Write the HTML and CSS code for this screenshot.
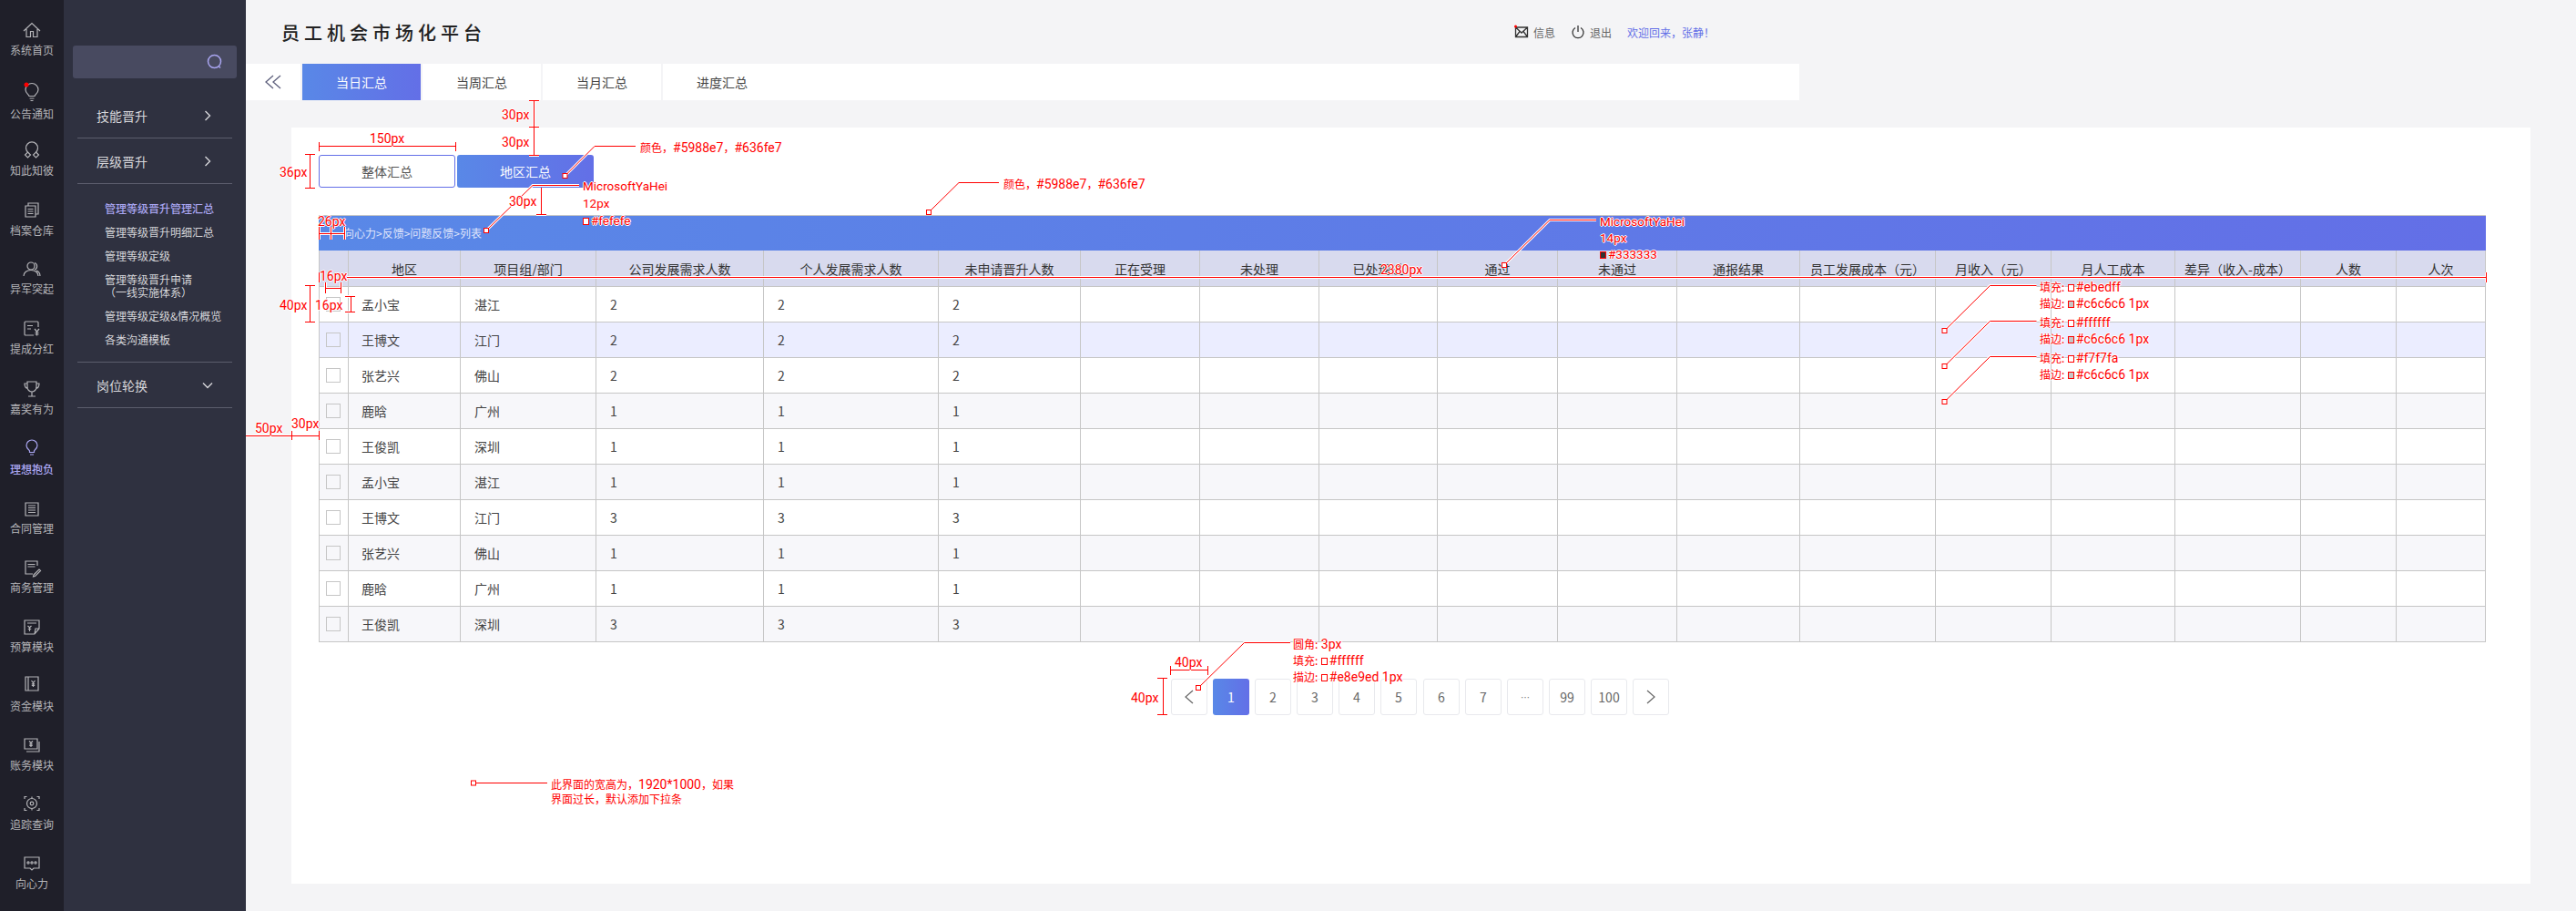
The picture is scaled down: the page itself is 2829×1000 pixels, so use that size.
FILE: index.html
```html
<!DOCTYPE html>
<html lang="zh-CN">
<head>
    <meta charset="UTF-8">
    <title>员工机会市场化平台</title>
    <link rel="stylesheet" href="styles.css">
</head>
<body>

<nav class="rail">
    <a class="rail-item">
        <svg viewBox="0 0 24 24"><path d="M3 13l9-8.5 9 8.5M6 11v8.5h4.5v-6h3v6H18V11"/></svg>
        <span>系统首页</span>
    </a>
    <a class="rail-item">
        <svg viewBox="0 0 24 24"><path d="M9 14.5c0-1.5-4-3-4-7a7 7 0 0 1 14 0c0 4-4 5.5-4 7zM9.5 17h5M10.5 19.5h3"/><circle class="dot" cx="6" cy="2" r="2.5"/></svg>
        <span>公告通知</span>
    </a>
    <a class="rail-item">
        <svg viewBox="0 0 24 24"><path d="M8 14.5a6.5 6.5 0 1 1 8 0M7.5 14l3 3-3 3-3-3zM16.5 14l3 3-3 3-3-3z"/></svg>
        <span>知此知彼</span>
    </a>
    <a class="rail-item">
        <svg viewBox="0 0 24 24"><path d="M5 7h11v12H5zM8 7V4h11v12h-3M7.5 10.5h6M7.5 13h6M7.5 15.5h6"/></svg>
        <span>档案仓库</span>
    </a>
    <a class="rail-item">
        <svg viewBox="0 0 24 24"><circle cx="11" cy="9" r="4"/><path d="M3 20c0-4 3.5-6.5 8-6.5s8 2.500 8 6.500M15 5.500a4 4 0 0 1 0 7.500M17 14c2.500 1 4 3 4 6"/></svg>
        <span>异军突起</span>
    </a>
    <a class="rail-item">
        <svg viewBox="0 0 24 24"><path d="M19 10V5a1 1 0 0 0-1-1H5a1 1 0 0 0-1 1v13a1 1 0 0 0 1 1h9M7 8.500h6M7 12h4M15 12l2.500 3 2.500-3M17.500 15v4.500M15.500 16h4M15.500 18h4"/></svg>
        <span>提成分红</span>
    </a>
    <a class="rail-item">
        <svg viewBox="0 0 24 24"><path d="M7 4h10v6a5 5 0 0 1-10 0zM7 6H4c0 3 1 5 3.500 5.500M17 6h3c0 3-1 5-3.500 5.500M12 15v4.500M8 20h8"/></svg>
        <span>嘉奖有为</span>
    </a>
    <a class="rail-item active">
        <svg viewBox="0 0 24 24"><path d="M9.500 15.500V14c0-1-3.500-2.500-3.500-6a6 6 0 0 1 12 0c0 3.500-3.500 5-3.500 6v1.500zM10 18h4"/></svg>
        <span>理想抱负</span>
    </a>
    <a class="rail-item">
        <svg viewBox="0 0 24 24"><path d="M5 6h14v14H5zM8 9h8M8 11.500h8M8 14h8M8 16.500h8"/></svg>
        <span>合同管理</span>
    </a>
    <a class="rail-item">
        <svg viewBox="0 0 24 24"><path d="M18 10V5H5v14h8M7.500 8.500h8M7.500 11h8M14 20l6-6 1.500 1.500-6 6-2 .5z"/></svg>
        <span>商务管理</span>
    </a>
    <a class="rail-item">
        <svg viewBox="0 0 24 24"><path d="M4 5h16v9l-5 6H4zM7 8h10M20 14h-4l-1 6M7.500 11l2 2 2-2M9.500 13v4M7.800 14.500h3.400"/></svg>
        <span>预算模块</span>
    </a>
    <a class="rail-item">
        <svg viewBox="0 0 24 24"><path d="M5 2h14v15H5zM8 2v15M11.500 6l2 2.500 2-2.500M13.500 8.500V13M11.800 9.800h3.400M11.800 11.500h3.400"/></svg>
        <span>资金模块</span>
    </a>
    <a class="rail-item">
        <svg viewBox="0 0 24 24"><path d="M4 5h14v11H4zM20 8v11H6M9 7.500l2 2 2-2M11 9.500V14M9.300 10.800h3.400M9.300 12.500h3.400"/></svg>
        <span>账务模块</span>
    </a>
    <a class="rail-item">
        <svg viewBox="0 0 24 24"><circle cx="12" cy="11" r="5.500"/><circle cx="12" cy="11" r="1.800"/><path d="M4 6V3.500h2.500M20 6V3.500h-2.500M4 16v2.500h2.500M20 16v2.500h-2.500M12 3.500v1.500M12 17v1.500"/></svg>
        <span>追踪查询</span>
    </a>
    <a class="rail-item">
        <svg viewBox="0 0 24 24"><path d="M4 5h16v12h-6l-2 2-2-2H4z"/><circle cx="8" cy="11" r="1.100"/><circle cx="12" cy="11" r="1.100"/><circle cx="16" cy="11" r="1.100"/></svg>
        <span>向心力</span>
    </a>
</nav>

<aside class="panel">
    <div class="search">
        <svg viewBox="0 0 18 18"><circle cx="8.500" cy="8.500" r="7"/><path d="M13.500 14l1.500 1.500"/></svg>
    </div>
    <div class="menu-head">
        <span>技能晋升</span>
        <svg viewBox="0 0 12 12"><path d="M3.500 1l5 5-5 5"/></svg>
    </div>
    <div class="menu-head">
        <span>层级晋升</span>
        <svg viewBox="0 0 12 12"><path d="M3.500 1l5 5-5 5"/></svg>
    </div>
    <ul class="submenu">
        <li class="current">管理等级晋升管理汇总</li>
        <li>管理等级晋升明细汇总</li>
        <li>管理等级定级</li>
        <li class="two-line">管理等级晋升申请<br>（一线实施体系）</li>
        <li>管理等级定级&amp;情况概览</li>
        <li>各类沟通模板</li>
    </ul>
    <div class="menu-head">
        <span>岗位轮换</span>
        <svg viewBox="0 0 12 12"><path d="M1 3.500l5 5 5-5"/></svg>
    </div>
</aside>

<main class="main">
    <header class="topbar">
        <h1 class="title">员工机会市场化平台</h1>
        <div class="actions">
            <span class="action">
                <svg viewBox="0 0 16 16"><path d="M1.500 3h13v10.500h-13zM1.500 3l6.500 6 6.500-6M1.500 13.500L6 7.500M14.500 13.500L10 7.500"/><circle class="dot" cx="1.500" cy="2" r="1.500"/></svg>
                信息
            </span>
            <span class="action">
                <svg viewBox="0 0 16 16"><path d="M5 3.500a6 6 0 1 0 6 0M8 1v7"/></svg>
                退出
            </span>
            <span class="welcome">欢迎回来，张静！</span>
        </div>
    </header>

    <div class="tabs">
        <div class="collapse">
            <svg viewBox="0 0 20 18"><path d="M10 2L2 9l8 7M18 2l-8 7 8 7"/></svg>
        </div>
        <a class="tab active">当日汇总</a>
        <a class="tab">当周汇总</a>
        <a class="tab">当月汇总</a>
        <a class="tab">进度汇总</a>
    </div>

    <section class="card">
        <div class="switch">
            <button class="switch-btn">整体汇总</button>
            <button class="switch-btn active">地区汇总</button>
        </div>

        <div class="list">
            <div class="crumb">向心力&gt;反馈&gt;问题反馈&gt;列表</div>
            <table class="data">
                <colgroup>
                    <col><col><col><col><col><col><col><col><col>
                    <col><col><col><col><col><col><col><col><col>
                </colgroup>
                <thead>
                    <tr>
                        <th></th><th>地区</th><th>项目组/部门</th><th>公司发展需求人数</th><th>个人发展需求人数</th>
                        <th>未申请晋升人数</th><th>正在受理</th><th>未处理</th><th>已处理过</th><th>通过</th>
                        <th>未通过</th><th>通报结果</th><th>员工发展成本（元）</th><th>月收入（元）</th>
                        <th>月人工成本</th><th>差异（收入-成本）</th><th>人数</th><th>人次</th>
                    </tr>
                </thead>
                <tbody>
                    <tr><td><i class="check"></i></td><td>孟小宝</td><td>湛江</td><td>2</td><td>2</td><td>2</td><td></td><td></td><td></td><td></td><td></td><td></td><td></td><td></td><td></td><td></td><td></td><td></td></tr>
                    <tr class="selected"><td><i class="check"></i></td><td>王博文</td><td>江门</td><td>2</td><td>2</td><td>2</td><td></td><td></td><td></td><td></td><td></td><td></td><td></td><td></td><td></td><td></td><td></td><td></td></tr>
                    <tr><td><i class="check"></i></td><td>张艺兴</td><td>佛山</td><td>2</td><td>2</td><td>2</td><td></td><td></td><td></td><td></td><td></td><td></td><td></td><td></td><td></td><td></td><td></td><td></td></tr>
                    <tr class="alt"><td><i class="check"></i></td><td>鹿晗</td><td>广州</td><td>1</td><td>1</td><td>1</td><td></td><td></td><td></td><td></td><td></td><td></td><td></td><td></td><td></td><td></td><td></td><td></td></tr>
                    <tr><td><i class="check"></i></td><td>王俊凯</td><td>深圳</td><td>1</td><td>1</td><td>1</td><td></td><td></td><td></td><td></td><td></td><td></td><td></td><td></td><td></td><td></td><td></td><td></td></tr>
                    <tr class="alt"><td><i class="check"></i></td><td>孟小宝</td><td>湛江</td><td>1</td><td>1</td><td>1</td><td></td><td></td><td></td><td></td><td></td><td></td><td></td><td></td><td></td><td></td><td></td><td></td></tr>
                    <tr><td><i class="check"></i></td><td>王博文</td><td>江门</td><td>3</td><td>3</td><td>3</td><td></td><td></td><td></td><td></td><td></td><td></td><td></td><td></td><td></td><td></td><td></td><td></td></tr>
                    <tr class="alt"><td><i class="check"></i></td><td>张艺兴</td><td>佛山</td><td>1</td><td>1</td><td>1</td><td></td><td></td><td></td><td></td><td></td><td></td><td></td><td></td><td></td><td></td><td></td><td></td></tr>
                    <tr><td><i class="check"></i></td><td>鹿晗</td><td>广州</td><td>1</td><td>1</td><td>1</td><td></td><td></td><td></td><td></td><td></td><td></td><td></td><td></td><td></td><td></td><td></td><td></td></tr>
                    <tr class="alt"><td><i class="check"></i></td><td>王俊凯</td><td>深圳</td><td>3</td><td>3</td><td>3</td><td></td><td></td><td></td><td></td><td></td><td></td><td></td><td></td><td></td><td></td><td></td><td></td></tr>
                </tbody>
            </table>
        </div>

        <div class="pager">
            <a class="page"><svg viewBox="0 0 12 18"><path d="M10 2L2 9l8 7"/></svg></a>
            <a class="page active">1</a>
            <a class="page">2</a>
            <a class="page">3</a>
            <a class="page">4</a>
            <a class="page">5</a>
            <a class="page">6</a>
            <a class="page">7</a>
            <a class="page dots">⋯</a>
            <a class="page">99</a>
            <a class="page">100</a>
            <a class="page"><svg viewBox="0 0 12 18"><path d="M2 2l8 7-8 7"/></svg></a>
        </div>
    </section>
</main>

<!-- designer's red measurement marks, they sit over the whole page -->
<div class="marks">
    <svg class="marks-lines" viewBox="0 0 2829 1000">
        <defs>
            <g id="lines">
                <path d="M586.500 110V139M581 110.500h11M581 139.500h11M586.500 140V170M581 170.500h11"/>
                <path d="M350.500 160.500H500M350.500 156v10M500.500 156v10"/>
                <path d="M340.500 169v38M335 169.500h11M335 206.500h11"/>
                <path d="M620.500 193L653 160.500h45"/>
                <path d="M534 253l51-49.500h51"/>
                <path d="M594.500 206v29M589 235.500h11"/>
                <path d="M350.500 256.500H378M350.500 249v14M378.500 249v14M363.500 249v14"/>
                <path d="M357.500 316.500H374M357.500 310v12M374.500 310v12"/>
                <path d="M381 304.500H2730M350.500 299v11M2730.500 299v11"/>
                <path d="M340.500 313v41M335 313.500h11M335 353.500h11"/>
                <path d="M385.500 325v17M379 325.500h11M379 342.500h11"/>
                <path d="M1020 233l33-32.500h44"/>
                <path d="M1652 291l50-49.500h51"/>
                <path d="M2135.500 363l50-49.500h51M2135.500 402l50-49.500h51M2135.500 441l50-49.500h51"/>
                <path d="M1316 755l50.500-49.500h50.500"/>
                <path d="M1285.500 735.500H1326M1285.500 731v10M1326.500 731v10"/>
                <path d="M1277.500 744v41M1271 744.500h11M1271 784.500h11"/>
                <path d="M270 478.500h80M320.500 473v10M350.500 473v10"/>
                <path d="M522 859.500h79"/>
            </g>
            <g id="points">
                <rect x="618" y="190.500" width="5" height="5"/>
                <rect x="531.500" y="250.500" width="5" height="5"/>
                <rect x="1017.500" y="230.500" width="5" height="5"/>
                <rect x="1649.500" y="288.500" width="5" height="5"/>
                <rect x="2133" y="360.500" width="5" height="5"/>
                <rect x="2133" y="399.500" width="5" height="5"/>
                <rect x="2133" y="438.500" width="5" height="5"/>
                <rect x="1313.500" y="752.500" width="5" height="5"/>
                <rect x="517.500" y="857" width="5" height="5"/>
            </g>
        </defs>
        <use href="#lines" class="halo"/>
        <use href="#lines" class="ink"/>
        <use href="#points" class="point"/>
    </svg>

    <span class="mark m-30a">30px</span>
    <span class="mark m-30b">30px</span>
    <span class="mark m-150">150px</span>
    <span class="mark m-36">36px</span>
    <span class="mark m-30c">30px</span>
    <span class="mark m-26">26px</span>
    <span class="mark m-16a">16px</span>
    <span class="mark m-16b">16px</span>
    <span class="mark m-40a">40px</span>
    <span class="mark m-2380">2380px</span>
    <span class="mark m-40b">40px</span>
    <span class="mark m-40c">40px</span>
    <span class="mark m-50">50px</span>
    <span class="mark m-30d">30px</span>

    <div class="mark m-color1"><b>颜色，</b>#5988e7<b>，</b>#636fe7</div>
    <div class="mark m-color2"><b>颜色，</b>#5988e7<b>，</b>#636fe7</div>
    <div class="mark m-font1">MicrosoftYaHei<br>12px<br><i class="sw"></i>#fefefe</div>
    <div class="mark m-font2">MicrosoftYaHei<br>14px<br><i class="sw sw-dark"></i>#333333</div>
    <div class="mark m-cell1"><b>填充:</b> <i class="sw"></i>#ebedff<br><b>描边:</b> <i class="sw sw-gray"></i>#c6c6c6 1px</div>
    <div class="mark m-cell2"><b>填充:</b> <i class="sw"></i>#ffffff<br><b>描边:</b> <i class="sw sw-gray"></i>#c6c6c6 1px</div>
    <div class="mark m-cell3"><b>填充:</b> <i class="sw"></i>#f7f7fa<br><b>描边:</b> <i class="sw sw-gray"></i>#c6c6c6 1px</div>
    <div class="mark m-page"><b>圆角:</b> 3px<br><b>填充:</b> <i class="sw"></i>#ffffff<br><b>描边:</b> <i class="sw"></i>#e8e9ed 1px</div>
    <div class="mark m-note"><b>此界面的宽高为，</b>1920*1000<b>，如果</b><br><b>界面过长，默认添加下拉条</b></div>
</div>

</body>
</html>
```
FILE: styles.css
```css
* {
    box-sizing: border-box;
}

body {
    display: flex;
    width: 2829px;
    height: 1000px;
    margin: 0;
    overflow: hidden;
    position: relative;
    background: #f4f4f6;
    color: #333;
    font-family: "Noto Sans CJK SC", sans-serif;
    font-size: 14px;
}

svg {
    fill: none;
    stroke: currentColor;
}

svg .dot {
    fill: #f00;
    stroke: none;
}

/* icon rail */
.rail {
    flex: none;
    width: 70px;
    height: 1000px;
    padding-top: 21px;
    display: grid;
    grid-template-rows: 70px 62px 66px 64px 66px 66px 66px repeat(7, 65px) 64px;
    justify-items: center;
    align-content: start;
    background: #1f1f29;
    color: #b4b4b8;
}

.rail-item {
    display: flex;
    flex-direction: column;
    align-items: center;
    gap: 2px;
}

.rail-item svg {
    width: 24px;
    height: 24px;
    stroke-width: 1.2;
    overflow: visible;
}

.rail-item span {
    font-size: 12px;
    line-height: 16px;
    white-space: nowrap;
}

.rail-item.active {
    color: #aaa6f2;
    font-weight: 500;
}

/* second level menu */
.panel {
    flex: none;
    width: 200px;
    height: 1000px;
    padding: 50px 15px 0;
    background: #2f3140;
    color: #d6d6da;
}

.search {
    height: 36px;
    margin: 0 -5px 16px;
    padding-right: 15px;
    display: flex;
    justify-content: flex-end;
    align-items: center;
    border-radius: 3px;
    background: #484a60;
    color: #a9a5f0;
}

.search svg {
    width: 18px;
    height: 18px;
    stroke-width: 1.5;
}

.menu-head {
    height: 50px;
    padding: 0 21px;
    display: flex;
    justify-content: space-between;
    align-items: center;
    border-bottom: 1px solid #5c5d6d;
    font-size: 14px;
}

.menu-head svg {
    width: 12px;
    height: 12px;
    stroke-width: 1.4;
}

.submenu {
    margin: 0;
    padding: 14px 0 11px 30px;
    list-style: none;
    border-bottom: 1px solid #5c5d6d;
    font-size: 12px;
}

.submenu li {
    height: 26px;
    line-height: 26px;
    white-space: nowrap;
}

.submenu .current {
    color: #aaa6f2;
    font-weight: 500;
}

.submenu .two-line {
    height: 40px;
    padding-top: 6px;
    line-height: 14px;
}

/* main area */
.main {
    flex: 1;
    min-width: 0;
}

.topbar {
    height: 70px;
    padding-left: 39px;
    display: flex;
    align-items: center;
}

.title {
    margin: 0;
    font-size: 20px;
    font-weight: 500;
    letter-spacing: 5px;
    color: #222;
}

.actions {
    margin-left: auto;
    margin-right: 946px;
    display: flex;
    align-items: center;
    font-size: 12px;
    color: #666;
}

.action {
    display: flex;
    align-items: center;
    gap: 5px;
    margin-right: 17px;
}

.action svg {
    width: 16px;
    height: 16px;
    color: #333;
    stroke-width: 1.3;
    overflow: visible;
}

.welcome {
    color: #636fe7;
}

.tabs {
    width: 1706px;
    height: 40px;
    display: flex;
    background: #fff;
}

.collapse {
    width: 60px;
    display: flex;
    justify-content: center;
    align-items: center;
    color: #5d5f7c;
}

.collapse svg {
    width: 20px;
    height: 18px;
    stroke-width: 1.300;
}

.tab {
    width: 132px;
    line-height: 40px;
    text-align: center;
    border-left: 2px solid #f4f4f6;
    color: #444;
}

.tab.active {
    color: #fefefe;
    background: linear-gradient(to right, #5988e7, #636fe7) padding-box;
}

.card {
    width: 2459px;
    height: 830px;
    margin: 30px 0 0 50px;
    padding: 30px;
    background: #fff;
}

.switch {
    display: flex;
    gap: 2px;
}

.switch-btn {
    width: 150px;
    height: 36px;
    padding: 0;
    border: 1px solid #636fe7;
    border-radius: 3px;
    background: #fff;
    color: #555;
    font-family: inherit;
    font-size: 14px;
}

.switch-btn.active {
    border: none;
    color: #fefefe;
    background: linear-gradient(to right, #5988e7, #636fe7);
}

/* table */
.list {
    width: 2380px;
    margin-top: 30px;
    border-top: 1px solid #c6c6c6;
}

.crumb {
    height: 38px;
    padding-left: 27px;
    line-height: 38px;
    font-size: 12px;
    color: #dfe4fb;
    background: linear-gradient(to right, #5988e7, #636fe7);
}

.data {
    table-layout: fixed;
    width: 2380px;
    border-collapse: separate;
    border-spacing: 0;
    border-left: 1px solid #c6c6c6;
}

.data col:nth-child(1) { width: 32px; }
.data col:nth-child(2) { width: 123px; }
.data col:nth-child(3) { width: 149px; }
.data col:nth-child(4) { width: 184px; }
.data col:nth-child(5) { width: 192px; }
.data col:nth-child(6) { width: 156px; }
.data col:nth-child(7) { width: 131px; }
.data col:nth-child(8) { width: 131px; }
.data col:nth-child(9) { width: 130px; }
.data col:nth-child(10) { width: 132px; }
.data col:nth-child(11) { width: 131px; }
.data col:nth-child(12) { width: 135px; }
.data col:nth-child(13) { width: 149px; }
.data col:nth-child(14) { width: 127px; }
.data col:nth-child(15) { width: 136px; }
.data col:nth-child(16) { width: 138px; }
.data col:nth-child(17) { width: 105px; }
.data col:nth-child(18) { width: 98px; }

.data th,
.data td {
    padding: 0;
    border-right: 1px solid #c6c6c6;
    border-bottom: 1px solid #c6c6c6;
    white-space: nowrap;
}

.data th {
    height: 40px;
    font-weight: 400;
    background: #d8daee;
    color: #333;
}

.data td {
    height: 39px;
    padding-left: 15px;
    color: #444;
}

.data td:nth-child(2) {
    padding-left: 14px;
}

.data td:first-child {
    padding-left: 7px;
}

.data .selected td {
    background: #ebedff;
}

.data .alt td {
    background: #f7f7fa;
}

.check {
    display: block;
    width: 16px;
    height: 16px;
    border: 1px solid #c6c6c6;
}

/* pagination */
.pager {
    margin: 40px 0 0 936px;
    display: flex;
    gap: 6px;
}

.page {
    width: 40px;
    height: 40px;
    display: flex;
    justify-content: center;
    align-items: center;
    border: 1px solid #e8e9ed;
    border-radius: 3px;
    background: #fff;
    color: #666;
}

.page:nth-child(7) {
    margin-left: 1px;
}

.page svg {
    width: 12px;
    height: 18px;
    stroke-width: 1.200;
}

.page.active {
    border: none;
    color: #fff;
    background: linear-gradient(to right, #5988e7, #636fe7);
}

.page.dots {
    font-size: 10px;
    color: #777;
}

/* measurement marks */
.marks {
    position: absolute;
    left: 0;
    top: 0;
    width: 2829px;
    height: 1000px;
}

.marks-lines {
    display: block;
    width: 2829px;
    height: 1000px;
}

.marks-lines .halo {
    stroke: #fff;
    stroke-width: 3;
}

.marks-lines .ink {
    stroke: #f00;
    stroke-width: 1;
}

.marks-lines .point {
    fill: #fff;
    stroke: #f00;
    stroke-width: 1;
}

.mark {
    position: absolute;
    font-family: Roboto, "Noto Sans CJK SC", sans-serif;
    font-size: 14px;
    line-height: 18px;
    color: #f00;
    white-space: nowrap;
    text-shadow: -1px 0 #fff, 1px 0 #fff, 0 -1px #fff, 0 1px #fff;
}

.mark b {
    font-family: "Noto Sans CJK SC", sans-serif;
    font-size: 12px;
    font-weight: 400;
}

.sw {
    display: inline-block;
    width: 7px;
    height: 8px;
    margin-right: 2px;
    border: 1px solid #f00;
    background: #fff;
}

.sw-dark {
    background: #333;
}

.sw-gray {
    background: #c6c6c6;
}

.m-30a { left: 551px; top: 117px; }
.m-30b { left: 551px; top: 147px; }
.m-150 { left: 406px; top: 143px; }
.m-36 { left: 307px; top: 180px; }
.m-30c { left: 559px; top: 212px; }
.m-26 { left: 349px; top: 234px; }
.m-16a { left: 351px; top: 294px; }
.m-16b { left: 346px; top: 326px; }
.m-40a { left: 307px; top: 326px; }
.m-2380 { left: 1516px; top: 287px; }
.m-40b { left: 1290px; top: 718px; }
.m-40c { left: 1242px; top: 757px; }
.m-50 { left: 280px; top: 461px; }
.m-30d { left: 320px; top: 456px; }

.m-color1 { left: 703px; top: 153px; }
.m-color2 { left: 1102px; top: 193px; }
.m-font1 { left: 640px; top: 195px; line-height: 19px; font-size: 13.500px; }
.m-font2 { left: 1757px; top: 234px; font-size: 13.500px; }
.m-cell1 { left: 2240px; top: 306px; }
.m-cell2 { left: 2240px; top: 345px; }
.m-cell3 { left: 2240px; top: 384px; }
.m-page { left: 1420px; top: 698px; }
.m-note { left: 605px; top: 853px; line-height: 16px; }
```
